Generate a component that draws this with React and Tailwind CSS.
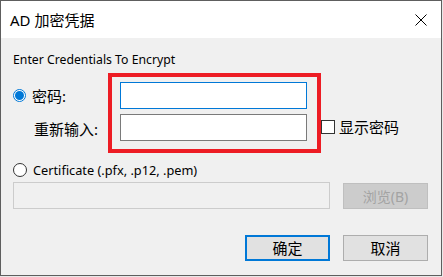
import React from "react";

const F = { fontFamily: '"Noto Sans", "Noto Sans CJK SC", sans-serif' };

export default function App() {
  return (
    <div className="w-[443px] h-[277px] bg-[#e8e8e8] overflow-hidden" style={F}>
      <div className="w-[442px] h-[276px] border border-[#5e5e5e] bg-[#f0f0f0] flex flex-col">
        {/* title bar */}
        <div className="h-[37px] bg-white flex items-center justify-between pl-[9px] pr-[14px] shrink-0">
          <span className="text-[15px] leading-[20px] text-black">AD 加密凭据</span>
          <svg width="12" height="12" viewBox="0 0 12 12" className="shrink-0">
            <path d="M0.5 0.5 L11.5 11.5 M11.5 0.5 L0.5 11.5" stroke="#000" strokeWidth="1" />
          </svg>
        </div>
        {/* body */}
        <div className="flex flex-col pl-[12px] pr-[13px] pt-[14px] text-black">
          <div className="text-[12.25px] leading-[16px]">Enter Credentials To Encrypt</div>
          <div className="flex mt-[5px] h-[80px]">
            <div className="w-[95px] flex flex-col pt-[9px] gap-[5px]">
              <div className="h-[27px] flex items-center gap-[6px]">
                <div className="w-[13px] h-[13px] rounded-full border border-[#0078d7] bg-white flex items-center justify-center">
                  <div className="w-[9px] h-[9px] rounded-full bg-[#0078d7]" />
                </div>
                <span className="text-[15px] leading-[18px]">密码:</span>
              </div>
              <div className="h-[27px] flex items-center pl-[21px] pt-[3px]">
                <span className="text-[15px] leading-[18px]">重新输入:</span>
              </div>
            </div>
            <div className="w-[213px] h-[80px] border-4 border-[#ed1c24] pl-[8px] pt-[5px] flex flex-col gap-[5px]">
              <div className="w-[187px] h-[27px] bg-white border border-[#0078d7]" />
              <div className="w-[187px] h-[27px] bg-white border border-[#7a7a7a]" />
            </div>
            <div className="flex items-center gap-[4px] self-end mb-[17px]">
              <div className="w-[14px] h-[14px] bg-white border border-[#333333]" />
              <span className="text-[15px] leading-[18px]">显示密码</span>
            </div>
          </div>
          <div className="flex items-center gap-[6px] mt-[9px] h-[16px]">
            <div className="w-[14px] h-[14px] rounded-full border border-[#333333] bg-white" />
            <span className="text-[12.75px] leading-[16px]">Certificate (.pfx, .p12, .pem)</span>
          </div>
          <div className="flex mt-[4px] gap-[13px] items-start">
            <div className="w-[317px] h-[27px] border border-[#cccccc]" />
            <div className="w-[85px] h-[26px] mt-[1px] bg-[#cccccc] border border-[#bfbfbf] flex items-center justify-center text-[14px] text-[#a3a3a3]">
              浏览(B)
            </div>
          </div>
          <div className="flex justify-end gap-[13px] mt-[26px]">
            <div className="w-[85px] h-[26px] bg-[#e1e1e1] border-2 border-[#0078d7] flex items-center justify-center text-[15px]">
              确定
            </div>
            <div className="w-[85px] h-[26px] bg-[#e1e1e1] border border-[#adadad] flex items-center justify-center text-[15px]">
              取消
            </div>
          </div>
        </div>
      </div>
    </div>
  );
}
